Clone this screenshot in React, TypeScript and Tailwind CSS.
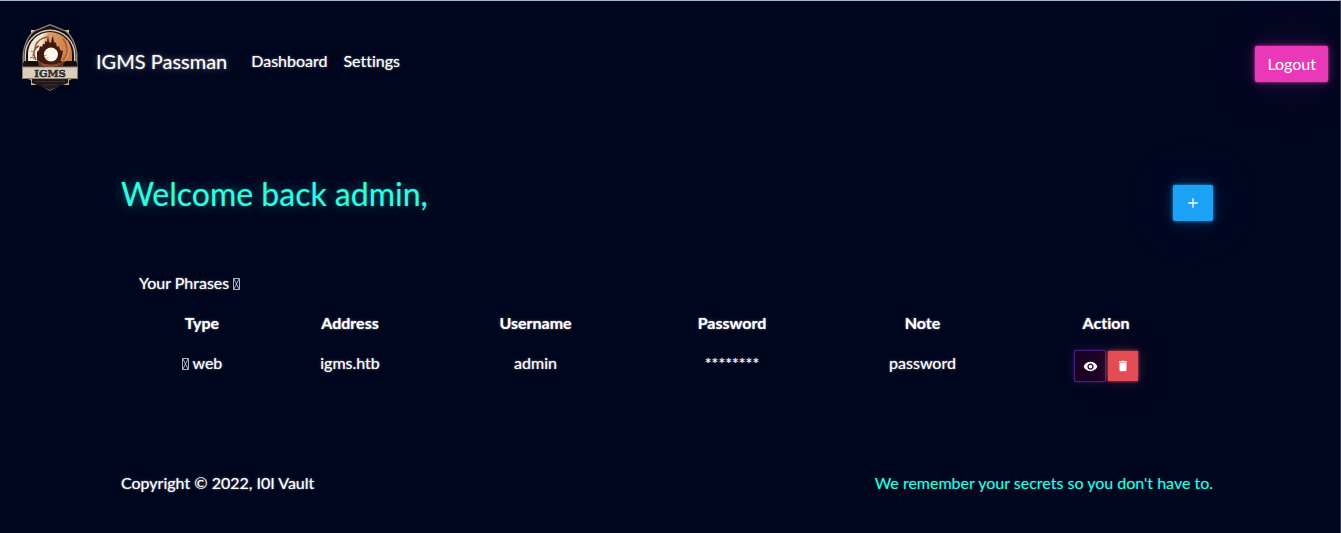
import React from "react";
import { MdAdd, MdDelete, MdRemoveRedEye } from "react-icons/md";

const columns = [
  { name: "Type", width: "w-[126px]" },
  { name: "Address", width: "w-[170px]" },
  { name: "Username", width: "w-[201px]" },
  { name: "Password", width: "w-[192px]" },
  { name: "Note", width: "w-[189px]" },
  { name: "Action", width: "w-[178px]" },
];

const phrases = [
  { type: "web", address: "igms.htb", username: "admin", password: "********", note: "password" },
];

function MissingGlyph() {
  return (
    <svg className="inline-block h-3 w-[7px] align-[-1px]" viewBox="0 0 7 12" fill="none" stroke="#c3c9d8" strokeWidth="0.9" aria-hidden="true">
      <path d="M.5.5h6v11h-6zM1 1l5 10M6 1l-5 10" />
    </svg>
  );
}

function Logo() {
  return (
    <svg className="h-[68px] w-14 shrink-0" viewBox="0 0 56 68" role="img" aria-label="IGMS">
      <defs>
        <linearGradient id="sky" x1="0" x2="1" y1="0" y2="0.15">
          <stop offset="0.34" stopColor="#f0e8da" />
          <stop offset="0.48" stopColor="#dc9c69" />
          <stop offset="1" stopColor="#cf7c46" />
        </linearGradient>
      </defs>
      <path d="M9 6h38v55H9z" fill="#d8cbb9" />
      <path d="M28 0 44 6.5C50 11 54 19 55.5 30V52L28 67 .5 52V30C2 19 6 11 12 6.5z" fill="#8f8174" />
      <path d="M28 1.5 43 7.500C49 12 53 20 54 30V51L28 65.500 2 51V30C3 20 7 12 13 7.500z" fill="#17100f" />
      <path d="M9 55h38v5.500H9z" fill="#b9a68f" />
      <path d="M10 55h36v4L28 66 10 59z" fill="#211819" />
      <path d="M2.500 37v-6a25.500 25.500 0 0 1 51 0v6z" fill="#d6cabb" />
      <path d="M4 37v-6a24 24 0 0 1 48 0v6z" fill="#1b1110" />
      <path d="M6 37v-7a22 22 0 0 1 44 0v7z" fill="url(#sky)" />
      <path d="M15 28l2-2 1-4 2 1 1-3h2v-3l2 1 1-7 1 7 2 1 1-5 1-2 1 6 2 1 1 4 2-1 1 4 3 1-1 5-2 6-6 5H20l-5-7z" fill="#40190f" />
      <path d="M45 15c4 7 4 14-1 22l-5 3c4-8 7-14 6-25z" fill="#e0925c" />
      <path d="M13 24c1-6 6-10 12-11M41 15c5 6 6 14 0 21" fill="none" stroke="#a8562e" strokeWidth="1.500" />
      <path d="M14 36c-4-7-2-12 3-14" fill="none" stroke="#8a4a30" strokeWidth="1.500" />
      <path d="M9 27l2 1M8 34l3-1 1 2M14 18l2 1M10 31h2" fill="none" stroke="#6b4a3a" strokeWidth="0.700" />
      <path d="M1 38.500h14l6 4h15l6-4h13v4.500H1z" fill="#160e0e" />
      <path d="M15 34c3 10 23 11 28 1l-2 7H17z" fill="#6a301b" />
      <path d="M16 37c5 5 19 6 25 0M19 40c5 3 14 3 19 0" fill="none" stroke="#a4532e" strokeWidth="1" />
      <circle cx="29" cy="30.500" r="7" fill="#fbf5ec" />
      <path d="M22 32l3-1M24 35l2-1M34 26l-1-1" fill="none" stroke="#c08a66" strokeWidth="0.800" />
      <path d="M0 42.500h56V55H0z" fill="#8e7e70" />
      <path d="M1 43.500h54V54H1z" fill="#dccdbb" />
      <text x="28" y="52.500" textAnchor="middle" fontFamily="DejaVu Serif, serif" fontWeight="700" fontSize="10" fill="#100c12" stroke="#100c12" strokeWidth="0.500">IGMS</text>
      <path d="M13 57.500h30M20 61h16" stroke="#40302a" strokeWidth="1" />
    </svg>
  );
}

export default function App() {
  return (
    <div className="min-h-screen border-t border-r border-t-[#a5b4d0] border-r-[#343b50] bg-[#01061f] font-['Lato',sans-serif] text-base text-white [font-variant-ligatures:none] [text-shadow:0_0_1px_rgba(255,255,255,0.5),0_0_3px_rgba(255,255,255,0.35)]">
      <header className="flex items-start justify-between pt-[23px] pr-3 pl-[22px]">
        <nav className="flex items-center" aria-label="Main">
          <Logo />
          <div className="ml-[18px] flex items-center pt-[6px]">
            <a href="#home" className="mr-4 text-xl [text-shadow:0_0_2px_rgba(255,255,255,0.5),0_0_10px_rgba(255,255,255,0.35)]">IGMS Passman</a>
            <a href="#dashboard" className="px-2">Dashboard</a>
            <a href="#settings" className="px-2">Settings</a>
          </div>
        </nav>
        <button type="button" className="mt-[22px] h-9 rounded-xs bg-[#ea39b8] px-3 shadow-[0_0_3px_#ea39b8,0_0_12px_rgba(234,57,184,0.35),0_0_60px_rgba(234,57,184,0.14)]">
          Logout
        </button>
      </header>

      <main className="mt-[79px] pr-[6px]">
        <div className="mx-auto w-full max-w-[1092px]">
          <div className="flex items-start justify-between">
            <h1 className="text-[32px] leading-[46px] text-[#32fbe2] [text-shadow:0_0_2px_rgba(50,251,226,0.4),0_0_12px_rgba(50,251,226,0.35),0_0_40px_rgba(50,251,226,0.2)]">
              Welcome back admin,
            </h1>
            <button type="button" aria-label="Add phrase" className="mt-[14px] flex h-9 w-10 items-center justify-center rounded-xs bg-[#1ba2f6] shadow-[0_0_3px_#1ba2f6,0_0_12px_rgba(27,162,246,0.35),0_0_60px_rgba(27,162,246,0.14)]">
              <MdAdd className="size-4" />
            </button>
          </div>

          <section className="mt-8 border border-[#00041a] px-[17px] pt-[17px] pb-7">
            <h2 className="leading-6">
              Your Phrases <MissingGlyph />
            </h2>
            <table className="mt-2 w-full table-fixed text-center leading-6">
              <thead>
                <tr>
                  {columns.map((column) => (
                    <th key={column.name} scope="col" className={`${column.width} py-2 font-bold`}>
                      {column.name}
                    </th>
                  ))}
                </tr>
              </thead>
              <tbody>
                {phrases.map((phrase) => (
                  <tr key={phrase.address} className="align-top">
                    <td className="py-2">
                      <MissingGlyph /> {phrase.type}
                    </td>
                    <td className="py-2">{phrase.address}</td>
                    <td className="py-2">{phrase.username}</td>
                    <td className="py-2">{phrase.password}</td>
                    <td className="py-2">{phrase.note}</td>
                    <td className="py-[7px]">
                      <div className="flex items-center justify-center gap-0.5">
                        <button type="button" aria-label="Show password" className="flex size-8 items-center justify-center rounded-xs border border-[#44217a] bg-[#1a0326] shadow-[0_0_2px_#44217a,0_0_12px_rgba(110,60,180,0.25)]">
                          <MdRemoveRedEye className="size-[15px]" />
                        </button>
                        <button type="button" aria-label="Delete phrase" className="flex size-[30px] items-center justify-center bg-[#e44c55] shadow-[0_0_3px_#e44c55,0_0_12px_rgba(228,76,85,0.25),0_0_40px_rgba(228,76,85,0.14)]">
                          <MdDelete className="size-[14px]" />
                        </button>
                      </div>
                    </td>
                  </tr>
                ))}
              </tbody>
            </table>
          </section>

          <footer className="mt-[53px] flex justify-between pb-9 leading-6">
            <p>Copyright © 2022, I0I Vault</p>
            <p className="text-[#32fbe2] [text-shadow:0_0_2px_rgba(50,251,226,0.35)]">
              We remember your secrets so you don't have to.
            </p>
          </footer>
        </div>
      </main>
    </div>
  );
}
